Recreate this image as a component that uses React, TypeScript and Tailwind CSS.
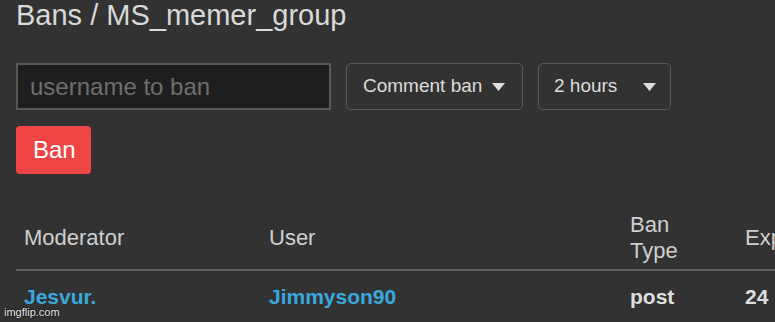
import React from "react";

function Caret() {
  return (
    <svg width="13" height="8" viewBox="0 0 13 8" className="shrink-0">
      <path d="M0 0 L13 0 L6.5 8 Z" fill="#dedede" />
    </svg>
  );
}

export default function App() {
  return (
    <div
      className="relative w-[775px] h-[322px] overflow-hidden bg-[#323232]"
      style={{ fontFamily: '"Liberation Sans", Arial, sans-serif' }}
    >
      <div className="pl-[16px] text-[29px] leading-[30px] text-[#d9d9d9] whitespace-nowrap">
        Bans / MS_memer_group
      </div>

      <div className="mt-[33px] ml-[16px] flex gap-[15px] h-[47px]">
        <div className="w-[315px] h-full bg-[#1e1e1e] border-2 border-[#585858] flex items-center pl-[12px]">
          <span className="text-[24px] text-[#6e6e6e] whitespace-nowrap">username to ban</span>
        </div>
        <div className="w-[177px] h-full rounded-[5px] border border-[#5a5a5a] flex items-center pl-[16px] gap-[10px]">
          <span className="text-[19px] text-[#dcdcdc] whitespace-nowrap">Comment ban</span>
          <Caret />
        </div>
        <div className="w-[133px] h-full rounded-[5px] border border-[#5a5a5a] flex items-center justify-between pl-[15px] pr-[14px]">
          <span className="text-[19px] text-[#dcdcdc] whitespace-nowrap">2 hours</span>
          <Caret />
        </div>
      </div>

      <div className="mt-[16px] ml-[16px] w-[75px] h-[48px] rounded-[4px] bg-[#ef4545] flex items-center pl-[17px]">
        <span className="text-[24px] text-white">Ban</span>
      </div>

      <div className="ml-[16px] mt-[31px] w-[900px] h-[66px] border-b-2 border-[#5e5e5e] flex items-center text-[22px] leading-[26px] text-[#cfcfcf]">
        <div className="w-[245px] shrink-0 pl-[8px] pt-[2px]">Moderator</div>
        <div className="w-[361px] shrink-0 pl-[8px] pt-[2px]">User</div>
        <div className="w-[115px] shrink-0 pl-[8px] pt-[2px]">
          Ban
          <br />
          Type
        </div>
        <div className="shrink-0 pl-[8px] pt-[2px]">Expires</div>
      </div>

      <div className="ml-[16px] pt-[13px] w-[900px] flex text-[21px] leading-[26px] font-bold">
        <div className="w-[245px] shrink-0 pl-[8px] text-[#3aa8dc]">Jesvur.</div>
        <div className="w-[361px] shrink-0 pl-[8px] text-[#3aa8dc]">Jimmyson90</div>
        <div className="w-[115px] shrink-0 pl-[8px] text-[#dedede]">post</div>
        <div className="shrink-0 pl-[8px] text-[#dedede]">24 hours</div>
      </div>

      <div
        className="absolute left-[4px] bottom-[3px] text-[11px] leading-[13px] text-[#f0f0f0]"
        style={{ textShadow: "0 0 2px #000, 0 0 1px #000" }}
      >
        imgflip.com
      </div>
    </div>
  );
}
